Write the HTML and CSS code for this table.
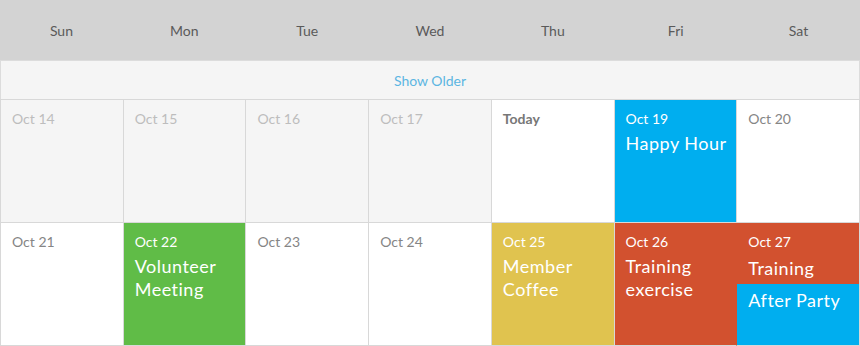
FILE: index.html
```html
<!DOCTYPE html>
<html>
<head>
<meta charset="utf-8">
<link rel="stylesheet" href="styles.css">
</head>
<body>
<div class="calendar">
  <div class="days">
    <div>Sun</div><div>Mon</div><div>Tue</div><div>Wed</div><div>Thu</div><div>Fri</div><div>Sat</div>
  </div>
  <div class="older">Show Older</div>
  <div class="weeks">
    <div class="cell past"><div class="date">Oct 14</div></div>
    <div class="cell past"><div class="date">Oct 15</div></div>
    <div class="cell past"><div class="date">Oct 16</div></div>
    <div class="cell past"><div class="date">Oct 17</div></div>
    <div class="cell"><div class="date today">Today</div></div>
    <div class="cell ev blue"><div class="date">Oct 19</div><div class="title">Happy Hour</div></div>
    <div class="cell"><div class="date">Oct 20</div></div>

    <div class="cell"><div class="date">Oct 21</div></div>
    <div class="cell ev green"><div class="date">Oct 22</div><div class="title">Volunteer Meeting</div></div>
    <div class="cell"><div class="date">Oct 23</div></div>
    <div class="cell"><div class="date">Oct 24</div></div>
    <div class="cell ev yellow"><div class="date">Oct 25</div><div class="title">Member Coffee</div></div>
    <div class="cell ev red join"><div class="date">Oct 26</div><div class="title">Training exercise</div></div>
    <div class="cell ev red split">
      <div class="date">Oct 27</div>
      <div class="title second">Training</div>
      <div class="sub blue"><div class="title">After Party</div></div>
    </div>
  </div>
</div>
</body>
</html>
```

FILE: styles.css
```css
html, body {
  margin: 0;
  padding: 0;
  background: #fff;
}
body {
  font-family: Lato, "Open Sans", sans-serif;
}
.calendar {
  width: 860px;
}
.days {
  display: grid;
  grid-template-columns: repeat(7, 1fr);
  height: 60px;
  background: #d3d3d3;
  color: #5a5a5a;
  font-size: 14px;
}
.days div {
  display: flex;
  align-items: center;
  justify-content: center;
}
.older {
  height: 38px;
  border: 1px solid #dcdcdc;
  border-bottom: none;
  background: #f5f5f5;
  color: #5cb6e2;
  font-size: 14px;
  display: flex;
  align-items: center;
  justify-content: center;
}
.weeks {
  display: grid;
  grid-template-columns: repeat(7, 1fr);
  grid-auto-rows: 123px;
  border-top: 1px solid #d8d8d8;
  border-left: 1px solid #d8d8d8;
}
.cell {
  border-right: 1px solid #d8d8d8;
  border-bottom: 1px solid #d8d8d8;
  background: #fff;
  display: flex;
  flex-direction: column;
  overflow: hidden;
}
.date {
  padding: 10px 11px 0;
  font-size: 14px;
  line-height: 17px;
  color: #858585;
}
.today {
  font-weight: bold;
  color: #777;
}
.past {
  background: #f5f5f5;
}
.past .date {
  color: #bdbdbd;
}
.title {
  padding: 5px 4px 0 11px;
  font-size: 18px;
  letter-spacing: 0.5px;
  line-height: 23px;
  color: #fff;
}
.ev .date {
  color: #fff;
}
.blue { background: #00aeef; }
.green { background: #60bc47; }
.yellow { background: #e0c34f; }
.red { background: #d2512f; }
.join { border-right-color: #d2512f; }
.title.second {
  padding-top: 7px;
  padding-bottom: 4px;
}
.sub {
  flex: 1;
}
.sub .title {
  padding-top: 5px;
}
```
